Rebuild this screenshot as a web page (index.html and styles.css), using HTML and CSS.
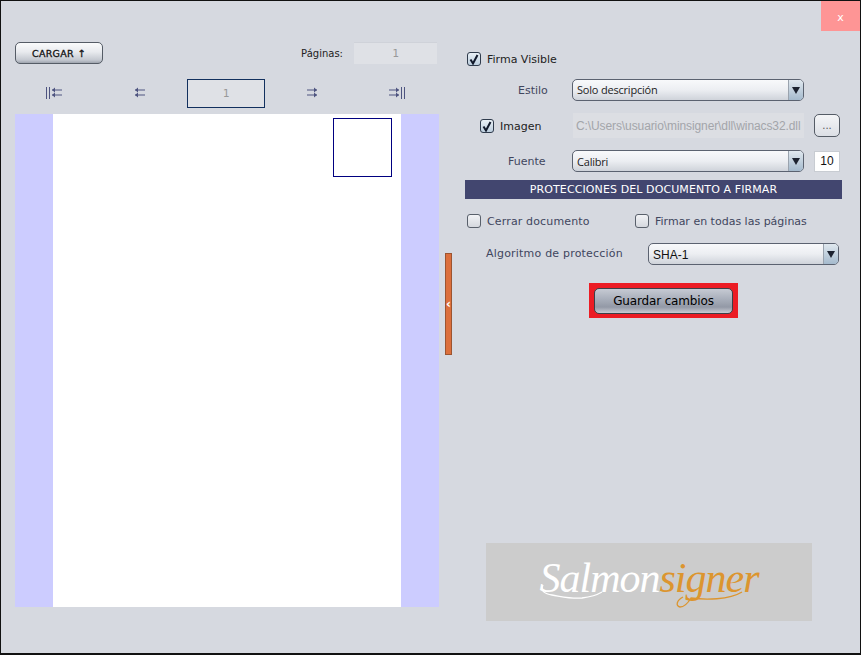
FILE: index.html
```html
<!DOCTYPE html>
<html lang="es">
<head>
    <meta charset="UTF-8">
    <meta name="viewport" content="width=device-width, initial-scale=1.0">
    <title>Salmon signer</title>
    <link rel="stylesheet" href="styles.css">
</head>
<body>
    <div class="window">
        <div class="title-bar">
            <button class="close-btn">x</button>
        </div>

        <div class="content">
            <section class="left-pane">
                <div class="load-row">
                    <button class="btn load-btn">CARGAR <span class="up">&#8593;</span></button>
                    <div class="pages">
                        <span class="pages-label">Páginas:</span>
                        <input class="pages-input" type="text" value="1" disabled>
                    </div>
                </div>

                <div class="nav-row">
                    <div class="nav-cell">
                        <svg class="nav-icon" width="16" height="12" viewBox="0 0 16 12"><path d="M.5 0v12M3.500 0v12M6 3h10M6 8h10"/><path class="head" d="M9 .5 6 3l3 2.500zM9 5.500 6 8l3 2.500z"/></svg>
                    </div>
                    <div class="nav-cell">
                        <svg class="nav-icon" width="10" height="12" viewBox="0 0 10 12"><path d="M0 3h10M0 8h10"/><path class="head" d="M3 .5 0 3l3 2.500zM3 5.500 0 8l3 2.500z"/></svg>
                    </div>
                    <input class="page-input" type="text" value="1" disabled>
                    <div class="nav-cell">
                        <svg class="nav-icon" width="10" height="12" viewBox="0 0 10 12"><path d="M0 3h10M0 8h10"/><path class="head" d="M7 .5 10 3 7 5.500zM7 5.500 10 8l-3 2.500z"/></svg>
                    </div>
                    <div class="nav-cell">
                        <svg class="nav-icon" width="16" height="12" viewBox="0 0 16 12"><path d="M0 3h10M0 8h10M12.500 0v12M15.500 0v12"/><path class="head" d="M7 .5 10 3 7 5.500zM7 5.500 10 8l-3 2.500z"/></svg>
                    </div>
                </div>

                <div class="preview">
                    <div class="sheet">
                        <div class="sign-box"></div>
                    </div>
                </div>
            </section>

            <div class="splitter">
                <div class="handle">&#8249;</div>
            </div>

            <section class="right-pane">
                <label class="check-row visible-row">
                    <span class="check checked"><svg width="10" height="11" viewBox="0 0 10 11"><path d="M1.500 5.500 4 9.500 8.500 1"/></svg></span>
                    <span class="strong-label">Firma Visible</span>
                </label>

                <div class="form-row style-row">
                    <span class="form-label">Estilo</span>
                    <div class="select style-select">
                        <span class="select-text">Solo descripción</span>
                        <span class="select-arrow"></span>
                    </div>
                </div>

                <div class="image-row">
                    <label class="check-row image-check">
                        <span class="check checked"><svg width="10" height="11" viewBox="0 0 10 11"><path d="M1.500 5.500 4 9.500 8.500 1"/></svg></span>
                        <span class="strong-label">Imagen</span>
                    </label>
                    <input class="path-input" type="text" value="C:\Users\usuario\minsigner\dll\winacs32.dll" disabled>
                    <button class="btn browse-btn">...</button>
                </div>

                <div class="form-row font-row">
                    <span class="form-label">Fuente</span>
                    <div class="select font-select">
                        <span class="select-text">Calibri</span>
                        <span class="select-arrow"></span>
                    </div>
                    <input class="size-input" type="text" value="10">
                </div>

                <div class="banner">PROTECCIONES DEL DOCUMENTO A FIRMAR</div>

                <div class="options-row">
                    <label class="check-row close-option">
                        <span class="check"></span>
                        <span class="option-label">Cerrar documento</span>
                    </label>
                    <label class="check-row">
                        <span class="check"></span>
                        <span class="option-label">Firmar en todas las páginas</span>
                    </label>
                </div>

                <div class="algo-row">
                    <span class="option-label algo-label">Algoritmo de protección</span>
                    <div class="select algo-select">
                        <span class="select-text algo-text">SHA-1</span>
                        <span class="select-arrow"></span>
                    </div>
                </div>

                <div class="save-wrap">
                    <div class="save-frame">
                        <button class="btn save-btn">Guardar cambios</button>
                    </div>
                </div>

                <div class="logo">
                    <span class="logo-white">Salmon</span><span class="logo-orange">signer</span>
                    <svg class="logo-swash" width="326" height="78" viewBox="0 0 326 78">
                        <path class="swash-white" d="M57 42c-3 6 2 9 9 10 12 2 20 4 30 3 8-1 15-3 20-6"/>
                        <path class="swash-orange" d="M197 54c-6 3-8 9-3 10 5 0 8-4 11-9 14 2 38 2 51-6"/>
                    </svg>
                </div>
            </section>
        </div>
    </div>
</body>
</html>
```

FILE: styles.css
```css
* {
    box-sizing: border-box;
}

body {
    margin: 0;
    background: #d6d9e0;
    font-family: 'DejaVu Sans', sans-serif;
    color: #222;
}

.window {
    width: 861px;
    height: 655px;
    background: #d6d9e0;
    border: 1px solid #111;
    border-width: 1px 1px 2px 1px;
    overflow: hidden;
}

.title-bar {
    height: 30px;
    display: flex;
    justify-content: flex-end;
}

.close-btn {
    width: 39px;
    height: 30px;
    border: none;
    background: #fe9595;
    color: #fff;
    font-family: 'DejaVu Sans', sans-serif;
    font-size: 11px;
    padding: 3px 0 0;
}

.content {
    display: flex;
}

.btn {
    border: 1px solid #555c66;
    border-radius: 5px;
    background: linear-gradient(#fafbfc, #e8eaee 45%, #c4c8d0 85%, #9ea4ae);
    color: #111;
    font-family: 'DejaVu Sans', sans-serif;
    padding: 0;
}

/* Columna izquierda */
.left-pane {
    width: 424px;
    margin-left: 14px;
    padding-top: 11px;
}

.load-row {
    display: flex;
    justify-content: space-between;
    height: 22px;
}

.load-btn {
    width: 88px;
    height: 22px;
    font-size: 9.5px;
    -webkit-text-stroke: 0.3px #111;
    letter-spacing: 0.3px;
}

.load-btn .up {
    font-size: 10px;
}

.pages {
    display: flex;
    align-items: center;
    margin-right: 2px;
}

.pages-label {
    font-size: 10px;
    margin-right: 11px;
}

.pages-input {
    width: 83px;
    height: 22px;
    border: none;
    border-top: 1px solid #cfd2d9;
    background: #dfe1e6;
    color: #999;
    font-family: 'DejaVu Sans Mono', monospace;
    font-size: 11px;
    text-align: center;
    padding: 0;
}

.nav-row {
    display: flex;
    align-items: center;
    height: 29px;
    margin-top: 15px;
}

.nav-cell {
    display: flex;
    justify-content: center;
    margin-top: -1px;
}

.nav-cell:nth-child(1) {
    width: 77px;
}

.nav-cell:nth-child(2) {
    width: 95px;
}

.nav-cell:nth-child(4) {
    width: 94px;
}

.nav-cell:nth-child(5) {
    width: 76px;
}

.nav-icon {
    fill: none;
    stroke: #4e5480;
    stroke-width: 1;
}

.nav-icon .head {
    fill: #4e5480;
    stroke: none;
}

.page-input {
    width: 78px;
    height: 29px;
    border: 1px solid #12305e;
    background: #dfe1e6;
    color: #999;
    font-family: 'DejaVu Sans Mono', monospace;
    font-size: 11px;
    text-align: center;
    padding: 0;
}

.preview {
    height: 493px;
    margin-top: 6px;
    background: #ccccff;
    display: flex;
    justify-content: center;
}

.sheet {
    width: 348px;
    background: #fff;
    display: flex;
    justify-content: flex-end;
    align-items: flex-start;
    padding: 4px 9px 0 0;
}

.sign-box {
    width: 59px;
    height: 59px;
    border: 1px solid #000080;
}

/* Separador */
.splitter {
    width: 26px;
    padding: 222px 0 0 6px;
}

.handle {
    width: 7px;
    height: 102px;
    background: #dc6f3c;
    border: 1px solid #9c5430;
    color: #fff;
    font-size: 12px;
    font-weight: bold;
    line-height: 100px;
    text-align: center;
    overflow: hidden;
}

/* Columna derecha */
.right-pane {
    width: 377px;
    padding-top: 21px;
}

.check-row {
    display: flex;
    align-items: center;
}

.check {
    width: 14px;
    height: 14px;
    border: 1px solid #59606b;
    border-radius: 3px;
    background: linear-gradient(#f2f3f6, #d5d8de);
    display: flex;
    align-items: center;
    justify-content: center;
}

.check.checked {
    background: linear-gradient(#e9f0f6, #bccede);
    border-color: #2f3b4c;
}

.check svg {
    fill: none;
    stroke: #10182a;
    stroke-width: 2;
}

.strong-label {
    font-size: 11px;
    margin-left: 6px;
    color: #222;
}

.visible-row {
    margin-left: 2px;
    height: 14px;
}

.form-row {
    display: flex;
    align-items: center;
}

.form-label {
    font-size: 11px;
    color: #41465e;
}

.select {
    height: 22px;
    border: 1px solid #5b6270;
    border-radius: 5px;
    background: linear-gradient(#f8f9fb, #eceef2 50%, #cfd3da);
    display: flex;
    align-items: center;
    justify-content: space-between;
    overflow: hidden;
}

.select-text {
    font-family: 'Open Sans', sans-serif;
    font-size: 11px;
    letter-spacing: -0.2px;
    color: #222;
    padding-left: 4px;
}

.style-select .select-text {
    padding-bottom: 2px;
}

.algo-text {
    font-family: 'Liberation Sans', sans-serif;
    font-size: 12px;
    letter-spacing: 0;
    color: #111;
    padding-top: 2px;
}

.select-arrow {
    width: 15px;
    height: 100%;
    border-left: 1px solid #9aa3ae;
    background: linear-gradient(#e0e8ef, #a5bacd);
    position: relative;
}

/* triangulo del desplegable */
.select-arrow::after {
    content: "";
    position: absolute;
    left: 3px;
    top: 7px;
    border-left: 4px solid transparent;
    border-right: 4px solid transparent;
    border-top: 7px solid #1c2230;
}

.style-row {
    margin-top: 13px;
    padding-left: 53px;
}

.style-row .form-label {
    width: 54px;
}

.style-select {
    width: 232px;
}

.image-row {
    display: flex;
    align-items: center;
    height: 25px;
    margin-top: 12px;
}

.image-check {
    width: 93px;
    margin-left: 15px;
    padding-top: 1px;
    flex-shrink: 0;
}

.path-input {
    width: 231px;
    height: 25px;
    border: none;
    background: #dcdee3;
    color: #a3a5aa;
    font-family: 'Liberation Sans', sans-serif;
    font-size: 12px;
    letter-spacing: -0.1px;
    padding: 0 3px;
}

.browse-btn {
    width: 26px;
    height: 23px;
    margin-left: 10px;
    font-size: 10px;
    background: linear-gradient(#f4f5f7, #dcdfe5);
    color: #555;
}

.font-row {
    margin-top: 12px;
    padding-left: 43px;
}

.font-row .form-label {
    width: 64px;
}

.font-select {
    width: 232px;
}

.size-input {
    width: 26px;
    height: 21px;
    margin-left: 10px;
    border: 1px solid #c8ccd2;
    background: #fff;
    color: #111;
    font-family: 'Liberation Sans', sans-serif;
    font-size: 12px;
    text-align: center;
    padding: 0;
}

.banner {
    height: 19px;
    margin-top: 8px;
    background: #42466f;
    color: #fff;
    font-size: 11px;
    letter-spacing: 0.1px;
    line-height: 19px;
    text-align: center;
}

.options-row {
    display: flex;
    margin-top: 15px;
    margin-left: 2px;
}

.close-option {
    width: 168px;
}

.option-label {
    font-size: 11px;
    color: #41465e;
    margin-left: 6px;
}

.close-option .option-label {
    letter-spacing: 0.15px;
}

.algo-row {
    display: flex;
    align-items: center;
    margin-top: 15px;
}

.algo-label {
    width: 162px;
    margin-left: 21px;
    padding-bottom: 2px;
    letter-spacing: 0.2px;
}

.algo-select {
    width: 191px;
}

.save-wrap {
    display: flex;
    margin-top: 18px;
    margin-left: 124px;
}

.save-frame {
    width: 149px;
    height: 35px;
    background: #ec1c24;
    padding: 5px;
}

.save-btn {
    width: 139px;
    height: 26px;
    font-size: 12px;
    letter-spacing: -0.15px;
    color: #000;
    border-color: #3c4048;
    background: linear-gradient(#c6cad3, #aab0bc 40%, #9399a6 75%, #c9ccd3);
}

.logo {
    position: relative;
    width: 326px;
    height: 78px;
    margin: 225px 0 0 21px;
    background: #cccccc;
    display: flex;
    align-items: center;
    justify-content: center;
    padding-bottom: 8px;
    font-family: 'Liberation Serif', serif;
    font-style: italic;
    font-size: 42px;
    letter-spacing: -1px;
}

.logo-white {
    color: #fff;
}

.logo-orange {
    color: #dc952f;
}

/* rasgos decorativos bajo el texto del logo */
.logo-swash {
    position: absolute;
    left: 0;
    top: 0;
    fill: none;
    stroke-width: 1.3;
}

.swash-white {
    stroke: #fff;
}

.swash-orange {
    stroke: #dc952f;
}
```
